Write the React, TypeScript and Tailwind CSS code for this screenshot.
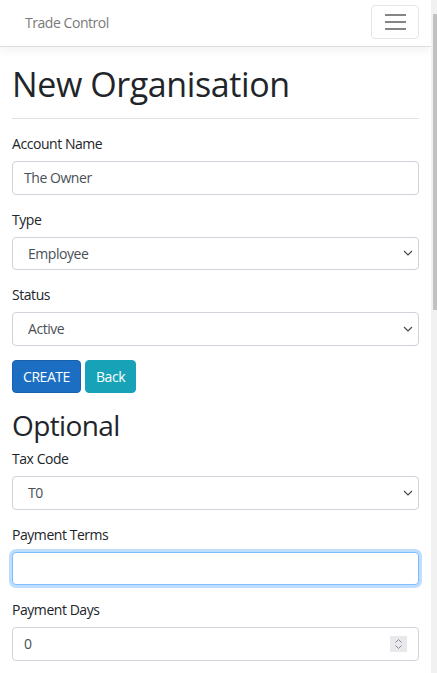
import React from "react";

const font = { fontFamily: '"Open Sans", "Noto Sans", sans-serif' };

const Chevron = () => (
  <svg width="10" height="6" viewBox="0 0 10 6" fill="none">
    <path d="M1 1l4 4 4-4" stroke="#4a4a4a" strokeWidth="1.2" />
  </svg>
);

const Field = ({ label, children }: { label: string; children: React.ReactNode }) => (
  <div className="mb-[14px]">
    <label className="block text-[14px] leading-[21px] mb-[7px] text-[#212529] tracking-[-0.45px]">{label}</label>
    {children}
  </div>
);

const Select = ({ value }: { value: string }) => (
  <div className="h-[33.5px] flex items-center justify-between pl-[15px] pr-[5px] border border-[#ced4da] rounded-[4px] bg-white text-[14px] text-[#495057] tracking-[-0.45px]">
    <span>{value}</span>
    <Chevron />
  </div>
);

const App = () => {
  return (
    <div className="flex h-[673px] w-[437px] overflow-hidden bg-white" style={font}>
      <div className="w-[431px] shrink-0">
        {/* Navbar */}
        <nav className="h-[47px] flex items-start justify-between pl-[25px] pr-[12px] border-b border-[#dedede] shadow-[0_4px_10px_rgba(0,0,0,0.05)]">
          <span className="mt-[12px] text-[14px] leading-[21px] text-[#7a7a7a] tracking-[-0.45px]">Trade Control</span>
          <button className="mt-[5px] w-[48px] h-[34px] border border-[#e5e5e5] rounded-[4px] flex flex-col items-center justify-center gap-[5px]">
            <span className="block w-[21px] h-[2px] bg-[#858585]" />
            <span className="block w-[21px] h-[2px] bg-[#858585]" />
            <span className="block w-[21px] h-[2px] bg-[#858585]" />
          </button>
        </nav>

        <div className="px-[12px]">
          <h1 className="mt-[17px] text-[34px] leading-[41px] text-[#212529] tracking-[-0.4px]">New Organisation</h1>
          <hr className="mt-[13px] mb-[14px] border-t border-[#e2e2e2]" />

          <Field label="Account Name">
            <input
              readOnly
              value="The Owner"
              className="w-full h-[33.5px] px-[11px] border border-[#ced4da] rounded-[4px] bg-white text-[14px] text-[#495057] tracking-[-0.45px] outline-none"
            />
          </Field>

          <Field label="Type">
            <Select value="Employee" />
          </Field>

          <Field label="Status">
            <Select value="Active" />
          </Field>

          <div className="flex gap-[4px]">
            <button className="h-[33.5px] w-[69px] rounded-[4px] bg-[#1b6ec2] border border-[#1861ac] text-white text-[14px] tracking-[-0.45px]">CREATE</button>
            <button className="h-[33.5px] w-[51px] rounded-[4px] bg-[#17a2b8] border border-[#17a2b8] text-white text-[14px] tracking-[-0.45px]">Back</button>
          </div>

          <h2 className="mt-[15px] mb-[5px] text-[28px] leading-[35px] text-[#212529] tracking-[-0.6px]">Optional</h2>

          <Field label="Tax Code">
            <Select value="T0" />
          </Field>

          <Field label="Payment Terms">
            <input
              readOnly
              value=""
              className="w-full h-[33.5px] px-[11px] border border-[#80bdff] rounded-[4px] bg-white text-[14px] text-[#495057] outline-none shadow-[0_0_0_3px_rgba(0,123,255,0.25)]"
            />
          </Field>

          <Field label="Payment Days">
            <div className="h-[33.5px] flex items-center justify-between pl-[11px] pr-[11px] border border-[#ced4da] rounded-[4px] bg-white text-[14px] text-[#495057]">
              <span>0</span>
              <div className="w-[17px] h-[16px] bg-[#e9e9ed] flex flex-col items-center justify-center gap-[2px]">
                <svg width="7" height="4" viewBox="0 0 7 4" fill="none">
                  <path d="M0.5 3.5l3-3 3 3" stroke="#8a8a8a" strokeWidth="1" />
                </svg>
                <svg width="7" height="4" viewBox="0 0 7 4" fill="none">
                  <path d="M0.5 0.5l3 3 3-3" stroke="#8a8a8a" strokeWidth="1" />
                </svg>
              </div>
            </div>
          </Field>
        </div>
      </div>

      {/* Scrollbar */}
      <div className="w-[6px] shrink-0 bg-[#f1f1f1] pt-[14px] pl-[2px]">
        <div className="h-[296px] bg-[#c1c1c1]" />
      </div>
    </div>
  );
};

export default App;
